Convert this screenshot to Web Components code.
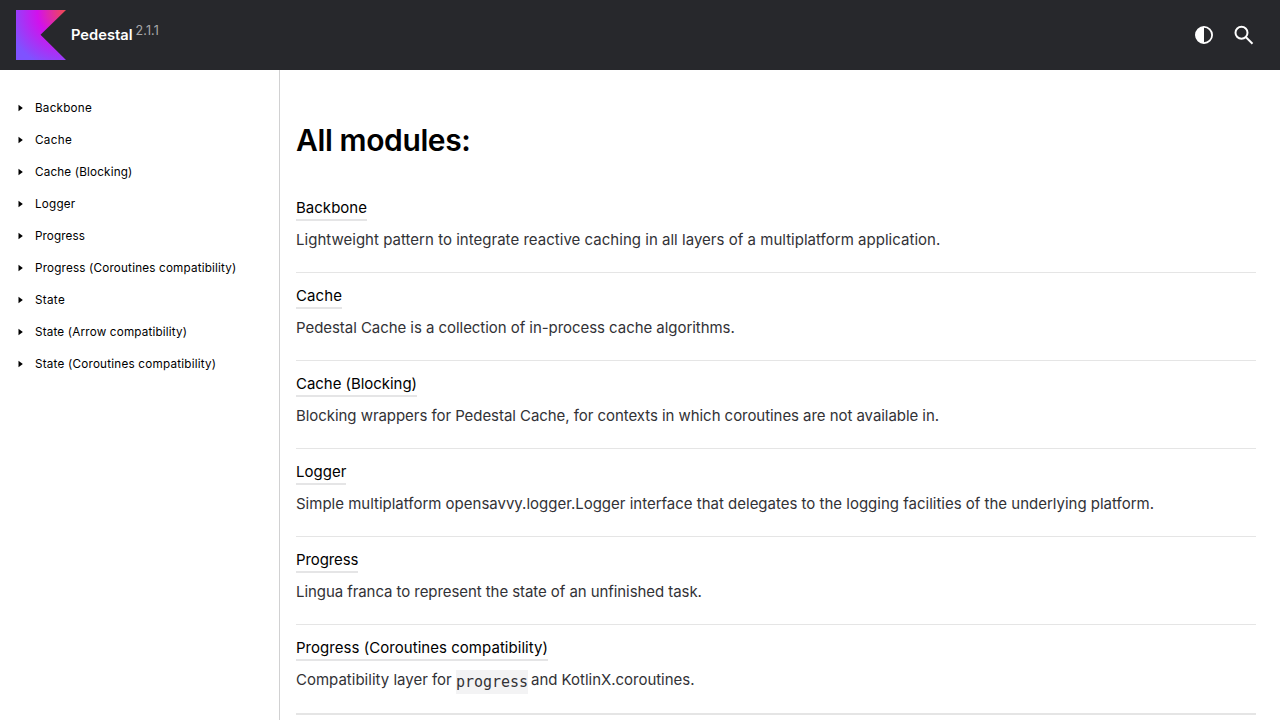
<!DOCTYPE html>
<html lang="en">
<head>
<meta charset="utf-8">
<title>All modules</title>
<style>
html,body{margin:0;height:100%;overflow:hidden;background:#fff;font-family:Inter,"Liberation Sans",sans-serif}
</style>
</head>
<body>
<docs-page></docs-page>
<script>
const define = (name, html, setup) => customElements.define(name, class extends HTMLElement {
  connectedCallback() {
    if (this.shadowRoot) return;
    const t = document.createElement('template');
    t.innerHTML = html;
    this.attachShadow({mode: 'open'}).append(t.content.cloneNode(true));
    if (setup) setup(this);
  }
});

/* Text tracked to occupy a given advance width. */
define('tracked-text', `<style>:host{display:inline-block;white-space:pre}</style><slot></slot>`, el => {
  const target = parseFloat(el.getAttribute('width'));
  const natural = el.getBoundingClientRect().width;
  el.style.letterSpacing = ((target - natural) / el.textContent.length) + 'px';
});

define('kotlin-logo', `<style>:host{display:block;width:50px;height:50px}svg{display:block}</style>
<svg width="50" height="50" viewBox="0 0 50 50"><defs><radialGradient id="g" gradientUnits="userSpaceOnUse" cx="48.4" cy="2" r="57.2"><stop offset=".003" stop-color="#ef4857"/><stop offset=".469" stop-color="#d211ec"/><stop offset="1" stop-color="#7f52ff"/></radialGradient></defs><path d="M50 50H0V0h50L24.500 24.700z" fill="url(#g)"/></svg>`);

define('nav-bar', `<style>
:host{display:flex;align-items:center;height:70px;box-sizing:border-box;padding:0 24px 0 16px;background:#27282c;color:#fff}
.name{margin-left:5px;font-size:14.700px;font-weight:600;line-height:24px}
.version{margin-left:3px;font-size:12.500px;line-height:16px;color:#a9a9ab;margin-top:-8px}
.tools{margin-left:auto;display:flex;gap:16px}
svg{display:block}
</style><kotlin-logo></kotlin-logo><tracked-text class="name" width="61.500">Pedestal</tracked-text><tracked-text class="version" width="23.500">2.1.1</tracked-text>
<div class="tools"><svg width="24" height="24" viewBox="0 0 24 24"><circle cx="12" cy="12" r="8.100" fill="none" stroke="#fff" stroke-width="1.800"/><path d="M12 4a8 8 0 0 0 0 16z" fill="#fff"/></svg>
<svg width="24" height="24" viewBox="0 0 24 24" fill="none" stroke="#fff" stroke-width="2"><circle cx="9.500" cy="9.700" r="6"/><path d="M14 14.200l6.500 6.500"/></svg></div>`);

define('nav-item', `<style>
:host{display:flex;align-items:center;height:32px;padding-left:18px;font-size:11.700px;line-height:16px;color:#000}
svg{display:block;width:5px;height:8px;margin-right:12px}
</style><svg viewBox="0 0 5 8"><path d="M.500 .700v6.600L4.800 4z"/></svg><slot></slot>`);

define('module-row', `<style>
:host{display:block;box-sizing:border-box;height:88px;padding-top:11px;border-bottom:1px solid #e5e5e5;font-size:15px;line-height:24px}
:host(:last-child){height:90px;border-bottom-width:2px}
.link{display:block;width:max-content;height:23px;color:#000;border-bottom:2px solid #e5e5e6}
.text{display:flex;height:24px;margin-top:7px;color:#323236}
</style><div class="link"><slot name="title"></slot></div><div class="text"><slot></slot></div>`);

define('code-chip', `<style>:host{display:block;height:24px;margin:2px 3px 0 0;background:#f3f3f4;font:15px/24px "DejaVu Sans Mono",monospace}</style><tracked-text width="72"><slot></slot></tracked-text>`);

const nav = [['Backbone',57],['Cache',37],['Cache (Blocking)',97.500],['Logger',40.500],['Progress',50],['Progress (Coroutines compatibility)',201.500],['State',30],['State (Arrow compatibility)',152.300],['State (Coroutines compatibility)',181.300]];
const modules = [
 ['Backbone',71,'Lightweight pattern to integrate reactive caching in all layers of a multiplatform application.',644.300],
 ['Cache',46,'Pedestal Cache is a collection of in-process cache algorithms.',438.700],
 ['Cache (Blocking)',121,'Blocking wrappers for Pedestal Cache, for contexts in which coroutines are not available in.',643],
 ['Logger',50.300,'Simple multiplatform opensavvy.logger.Logger interface that delegates to the logging facilities of the underlying platform.',858],
 ['Progress',62.300,'Lingua franca to represent the state of an unfinished task.',405.800],
 ['Progress (Coroutines compatibility)',252]
];
const tt = (s, w, slot = '') => `<tracked-text width="${w}"${slot}>${s}</tracked-text>`;
define('docs-page', `<style>
:host{display:block;height:720px}
.body{display:grid;grid-template-columns:280px 1fr;height:650px}
nav{box-sizing:border-box;border-right:1px solid #d1d1d2;padding-top:22px}
main{padding:0 24px 0 16px;overflow:hidden}
h1{margin:50px 0 25px;font-size:30px;font-weight:600;line-height:40px;color:#000}
</style><nav-bar></nav-bar><div class="body"><nav>${nav.map(([s,w]) => `<nav-item>${tt(s,w)}</nav-item>`).join('')}</nav>
<main><h1>${tt('All modules:',174.500)}</h1>${modules.map(([s,w,d,dw]) => `<module-row>${tt(s,w,' slot="title"')}${d ? tt(d,dw) : tt('Compatibility layer for ',160) + '<code-chip>progress</code-chip>' + tt('and KotlinX.coroutines.',163.500)}</module-row>`).join('')}</main></div>`);

/* The chip's label arrives through a slot, so its tracking is fixed here. */
for (const row of document.querySelector('docs-page').shadowRoot.querySelectorAll('code-chip')) {
  const t = row.shadowRoot.querySelector('tracked-text');
  t.style.letterSpacing = '0';
  t.style.letterSpacing = ((72 - t.getBoundingClientRect().width) / row.textContent.length) + 'px';
}
</script>
</body>
</html>
